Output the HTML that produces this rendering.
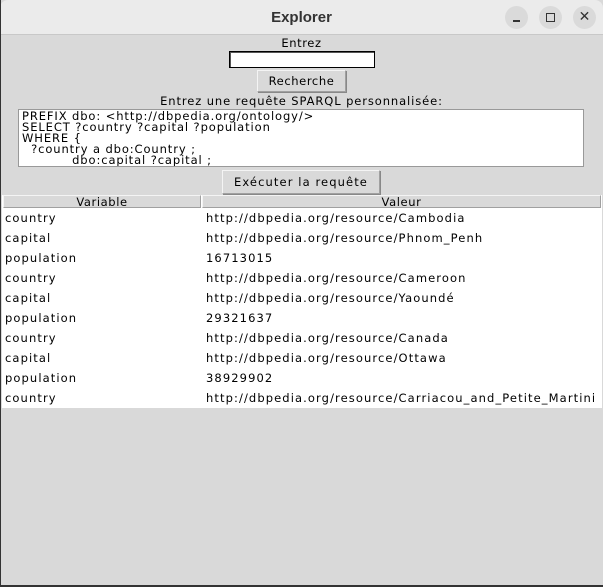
<!DOCTYPE html>
<html><head><style>
*{margin:0;padding:0;box-sizing:border-box}
body{width:603px;height:587px;overflow:hidden;background:#d9d9d9;font-family:"DejaVu Sans","Liberation Sans",sans-serif;font-size:11.5px;color:#000;position:relative}
.abs{position:absolute}
#tb{left:0;top:0;width:603px;height:35px;background:#ebebeb;border-bottom:1px solid #c8c8c8;border-radius:8px 8px 0 0}
#tb .t{position:absolute;left:0;right:0;top:9px;text-align:center;font-family:"Liberation Sans",sans-serif;font-weight:bold;font-size:15px;color:#333}
.cb{position:absolute;top:6px;width:23px;height:23px;border-radius:50%;background:#dadada}
.btn{background:#d9d9d9;border:1px solid #a0a0a0;border-top-color:#f4f4f4;border-left-color:#f4f4f4;box-shadow:1px 1px 0 #888;text-align:center}
.row{position:absolute;left:2px;width:598px;height:20px;line-height:20px;letter-spacing:1.1px}
.row span{position:absolute}
</style></head><body>
<div class="abs" id="tb"><div class="t">Explorer</div>
<div class="cb" style="left:505px"><div class="abs" style="left:8px;top:14px;width:7px;height:1.5px;background:#333"></div></div>
<div class="cb" style="left:539px"><div class="abs" style="left:7px;top:7px;width:9px;height:9px;border:1.5px solid #333"></div></div>
<div class="cb" style="left:573px;text-align:center;line-height:23px;font-size:14px;color:#333;font-family:'DejaVu Sans'">✕</div>
</div>
<div class="abs" style="left:0;top:0;width:1px;height:587px;background:#333"></div>
<div class="abs" style="left:0;top:585px;width:603px;height:2px;background:#333"></div>
<div class="abs" style="left:0;width:603px;top:36px;text-align:center;letter-spacing:0.6px">Entrez</div>
<div class="abs" style="left:229px;top:51px;width:146px;height:17px;background:#fff;border:1px solid #000;box-shadow:inset 1px 1px 0 #555"></div>
<div class="abs btn" style="left:257px;top:70px;width:89px;height:22px;line-height:20px;letter-spacing:0.6px">Recherche</div>
<div class="abs" style="left:0;width:603px;top:94px;text-align:center;letter-spacing:0.9px">Entrez une requête SPARQL personnalisée:</div>
<div class="abs" style="left:18px;top:109px;width:566px;height:58px;background:#fff;border:1px solid #999;overflow:hidden;padding:1px 0 0 3px;line-height:11px;font-size:11.5px;white-space:pre;letter-spacing:0.9px">PREFIX dbo: &lt;http://dbpedia.org/ontology/&gt;
SELECT ?country ?capital ?population
WHERE {
  ?country a dbo:Country ;
           dbo:capital ?capital ;</div>
<div class="abs btn" style="left:222px;top:170px;width:158px;height:24px;line-height:22px;letter-spacing:1.1px">Exécuter la requête</div>
<div class="abs" style="left:2px;top:195px;width:600px;height:213px;background:#fff"></div>
<div class="abs btn" style="left:3px;top:195px;width:198px;height:13px;line-height:12px;box-shadow:none;letter-spacing:0.6px">Variable</div>
<div class="abs btn" style="left:202px;top:195px;width:399px;height:13px;line-height:12px;box-shadow:none;letter-spacing:0.6px">Valeur</div>
<div class="row" style="top:208px"><span style="left:3px">country</span><span style="left:204px">http://dbpedia.org/resource/Cambodia</span></div>
<div class="row" style="top:228px"><span style="left:3px">capital</span><span style="left:204px">http://dbpedia.org/resource/Phnom_Penh</span></div>
<div class="row" style="top:248px"><span style="left:3px">population</span><span style="left:204px">16713015</span></div>
<div class="row" style="top:268px"><span style="left:3px">country</span><span style="left:204px">http://dbpedia.org/resource/Cameroon</span></div>
<div class="row" style="top:288px"><span style="left:3px">capital</span><span style="left:204px">http://dbpedia.org/resource/Yaoundé</span></div>
<div class="row" style="top:308px"><span style="left:3px">population</span><span style="left:204px">29321637</span></div>
<div class="row" style="top:328px"><span style="left:3px">country</span><span style="left:204px">http://dbpedia.org/resource/Canada</span></div>
<div class="row" style="top:348px"><span style="left:3px">capital</span><span style="left:204px">http://dbpedia.org/resource/Ottawa</span></div>
<div class="row" style="top:368px"><span style="left:3px">population</span><span style="left:204px">38929902</span></div>
<div class="row" style="top:388px;overflow:hidden"><span style="left:3px">country</span><span style="left:204px;white-space:nowrap">http://dbpedia.org/resource/Carriacou_and_Petite_Martini</span></div>
</body></html>
